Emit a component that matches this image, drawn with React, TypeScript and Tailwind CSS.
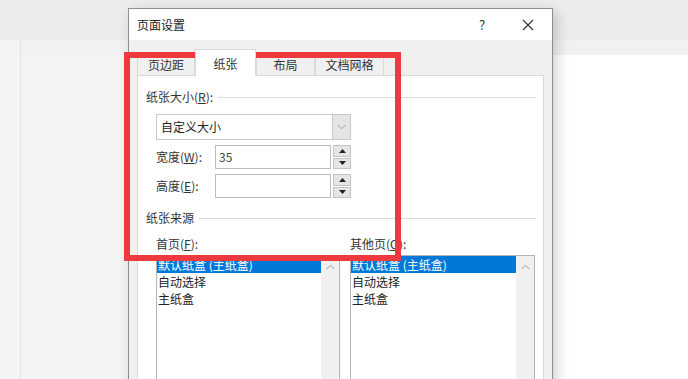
const FONT = { fontFamily: '"Noto Sans CJK SC", "Noto Sans", sans-serif' };

function Chevron({ up }: { up?: boolean }) {
  return (
    <svg width="9" height="6" viewBox="0 0 9 6" className={up ? 'rotate-180' : ''}>
      <path d="M0.5 0.8 L4.5 4.8 L8.5 0.8" fill="none" stroke="#9a9a9a" strokeWidth="1" />
    </svg>
  );
}

function Spinner() {
  return (
    <div className="ml-[2px] w-[18px] flex flex-col gap-[1px]">
      {[0, 1].map(i => (
        <div key={i} className="flex-1 bg-[#e5e5e5] border border-[#c4c4c4] grid place-items-center">
          <svg width="7" height="4" viewBox="0 0 7 4" className={i === 1 ? 'rotate-180' : ''}>
            <path d="M0 4 L3.5 0 L7 4 Z" fill="#222" />
          </svg>
        </div>
      ))}
    </div>
  );
}

function SectionHeader({ label }: { label: React.ReactNode }) {
  return (
    <div className="h-[16px] flex items-center">
      <span className="text-[12px] leading-none text-[#333]">{label}</span>
      <div className="flex-1 h-px bg-[#dcdcdc] ml-[5px]" />
    </div>
  );
}

function ListBox() {
  return (
    <div className="h-[140px] border border-[#b4b4b4] bg-white flex">
      <div className="flex-1 flex flex-col text-[12px] text-[#222] leading-[17px]">
        <div className="h-[17px] bg-[#0078d7] text-white pl-[1px]">默认纸盒 (主纸盒)</div>
        <div className="h-[17px] pl-[1px]">自动选择</div>
        <div className="h-[17px] pl-[1px]">主纸盒</div>
      </div>
      <div className="w-[18px] bg-[#f0f0f0] flex justify-center pt-[8px]">
        <Chevron up />
      </div>
    </div>
  );
}

function SpinRow({ label, value }: { label: React.ReactNode; value: string }) {
  return (
    <div className="ml-[10px] h-[24px] flex">
      <div className="w-[59px] flex items-center text-[12px] text-[#333]">{label}</div>
      <div className="w-[116px] border border-[#bcbcbc] bg-white flex items-center pl-[3px] text-[12px] text-[#444]">{value}</div>
      <Spinner />
    </div>
  );
}

export default function App() {
  const tabs = [
    { name: '页边距', w: 'w-[58px]' },
    { name: '纸张', w: 'w-[61px]', active: true },
    { name: '布局', w: 'w-[59px]' },
    { name: '文档网格', w: 'w-[69px]' },
  ];

  return (
    <div className="w-[688px] h-[379px] relative overflow-hidden bg-[#f3f3f3]" style={FONT}>
      {/* Word window behind */}
      <div className="h-[40px] bg-[#ececec]" />
      <div className="flex h-[339px]">
        <div className="w-[21px] border-r border-[#e2e2e2] bg-[#f4f4f4]" />
        <div className="flex-1 flex flex-col">
          <div className="h-[15px] bg-[#f1f1f1]" />
          <div className="flex-1 bg-white ml-[120px]" />
        </div>
      </div>

      {/* Dialog */}
      <div className="absolute left-[128px] top-[8px] w-[425px] h-[420px] border border-[#8e8e8e] bg-[#f0f0f0] shadow-[4px_4px_12px_rgba(0,0,0,0.18)] flex flex-col">
        <div className="h-[31px] bg-white flex items-center pl-[8px] shrink-0">
          <span className="text-[12px] text-[#222]">页面设置</span>
          <div className="ml-auto flex pr-[1px]">
            <div className="w-[46px] h-[31px] grid place-items-center text-[13px] text-[#333]">?</div>
            <div className="w-[46px] h-[31px] grid place-items-center">
              <svg width="12" height="12" viewBox="0 0 12 12">
                <path d="M1 1 L11 11 M11 1 L1 11" stroke="#333" strokeWidth="1.1" />
              </svg>
            </div>
          </div>
        </div>

        <div className="flex-1 px-[8px] pt-[9px] flex flex-col">
          <div className="h-[26px] flex items-end">
            {tabs.map(t => (
              <div key={t.name}
                className={`${t.w} ${t.active ? 'h-[27px] bg-white border-[#d9d9d9] border-b-white -mb-px z-10 pt-[1px]' : 'h-[22px] bg-[#f0f0f0] border-[#d9d9d9]'} border border-b-0 flex items-center justify-center text-[12px] text-[#333]`}>
                {t.name}
              </div>
            ))}
          </div>

          <div className="w-[407px] flex-1 bg-white border border-[#d9d9d9] pl-[8px] pr-[7px] pt-[13px] flex flex-col">
            <SectionHeader label={<>纸张大小(<span className="underline">R</span>):</>} />

            <div className="mt-[9px] ml-[10px] w-[195px] h-[26px] border border-[#c8c8c8] flex">
              <div className="flex-1 flex items-center pl-[4px] text-[12px] text-[#222]">自定义大小</div>
              <div className="w-[18px] bg-[#e5e5e5] border-l border-[#c8c8c8] grid place-items-center">
                <Chevron />
              </div>
            </div>

            <div className="mt-[5px]">
              <SpinRow label={<>宽度(<span className="underline">W</span>):</>} value="35" />
            </div>
            <div className="mt-[5px]">
              <SpinRow label={<>高度(<span className="underline">E</span>):</>} value="" />
            </div>

            <div className="mt-[12px]">
              <SectionHeader label="纸张来源" />
            </div>

            <div className="mt-[10px] ml-[10px] grid grid-cols-[184px_185px] gap-x-[10px]">
              <div className="h-[16px] flex items-center text-[12px] text-[#333]">首页(<span className="underline">F</span>):</div>
              <div className="h-[16px] flex items-center text-[12px] text-[#333]">其他页(<span className="underline">O</span>):</div>
              <div className="mt-[3px]"><ListBox /></div>
              <div className="mt-[3px]"><ListBox /></div>
            </div>
          </div>
        </div>
      </div>

      {/* Red annotation box */}
      <div className="absolute left-[124px] top-[52px] w-[277px] h-[209px] border-[6px] border-[#ec3a3f]" />
    </div>
  );
}
